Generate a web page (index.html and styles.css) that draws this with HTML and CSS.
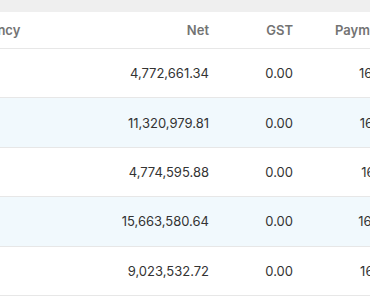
FILE: index.html
```html
<!DOCTYPE html>
<html lang="en">
<head>
<meta charset="utf-8">
<title>Payments</title>
<link rel="stylesheet" href="styles.css">
</head>
<body>
<div class="page">
  <div class="card">
    <div class="table">
      <div class="row head">
        <div class="cell left">Currency</div>
        <div class="cell num">Net</div>
        <div class="cell num">GST</div>
        <div class="cell num">Payment Amount</div>
      </div>
      <div class="row">
        <div class="cell left">AUD</div>
        <div class="cell num">4,772,661.34</div>
        <div class="cell num">0.00</div>
        <div class="cell num">16,772,661.34</div>
      </div>
      <div class="row hl">
        <div class="cell left">AUD</div>
        <div class="cell num">11,320,979.81</div>
        <div class="cell num">0.00</div>
        <div class="cell num">16,320,979.81</div>
      </div>
      <div class="row">
        <div class="cell left">AUD</div>
        <div class="cell num">4,774,595.88</div>
        <div class="cell num">0.00</div>
        <div class="cell num">16,774,595.18</div>
      </div>
      <div class="row hl">
        <div class="cell left">AUD</div>
        <div class="cell num">15,663,580.64</div>
        <div class="cell num">0.00</div>
        <div class="cell num">16,663,580.41</div>
      </div>
      <div class="row">
        <div class="cell left">AUD</div>
        <div class="cell num">9,023,532.72</div>
        <div class="cell num">0.00</div>
        <div class="cell num">16,023,532.17</div>
      </div>
    </div>
  </div>
</div>
</body>
</html>
```

FILE: styles.css
```css
html, body {
  margin: 0;
  padding: 0;
}
body {
  background: #ffffff;
  font-family: Inter, "Liberation Sans", sans-serif;
  font-size: 13px;
  color: #333333;
  overflow: hidden;
}
.page {
  background: #efefef;
  padding-top: 12px;
  height: 297px;
  box-sizing: border-box;
}
.card {
  background: #ffffff;
  height: 100%;
  overflow: hidden;
}
.table {
  margin-left: -54px;
  width: max-content;
}
.row {
  display: grid;
  grid-template-columns: 164px 115px 84px 150px;
  height: 49.4px;
  border-bottom: 1px solid #e7e7e7;
  box-sizing: border-box;
}
.row.head {
  height: 37px;
  font-weight: 600;
  color: #737373;
}
.row.hl {
  background: #f1f9fd;
}
.cell {
  display: flex;
  align-items: center;
  padding: 0 16px;
  white-space: nowrap;
}
.cell.left {
  justify-content: flex-start;
}
.cell.num {
  justify-content: flex-end;
}
```
